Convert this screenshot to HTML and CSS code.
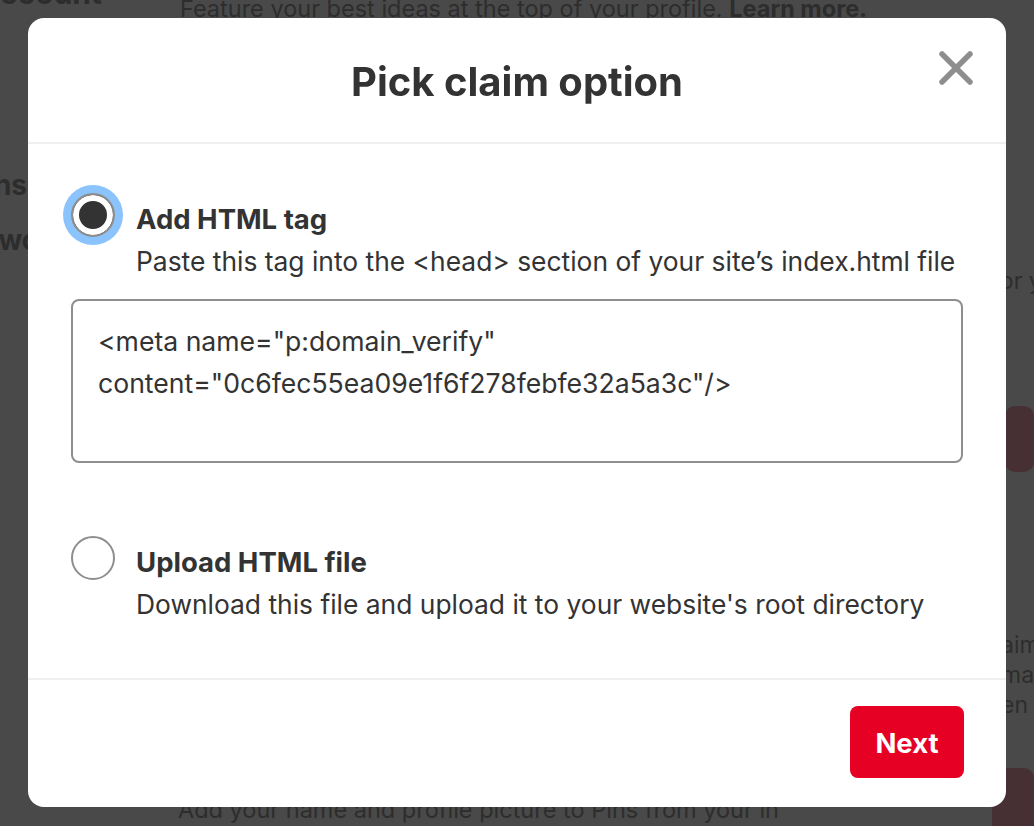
FILE: index.html
```html
<!DOCTYPE html>
<html lang="en">
<head>
    <meta charset="UTF-8">
    <meta name="viewport" content="width=device-width, initial-scale=1.0">
    <title>Pick claim option</title>
    <link rel="stylesheet" href="styles.css">
</head>
<body>
    <div class="page">
        <div class="sidebar">
            <div class="side-item side-top"><span>Account</span></div>
            <div class="side-item side-claims"><span>Notifications</span></div>
            <div class="side-item side-pass"><span>Password</span></div>
        </div>
        <div class="main">
            <p class="feature">Feature your best ideas at the top of your profile. <b>Learn more.</b></p>
            <div class="hidden-area"></div>
            <p class="bottom-text">Add your name and profile picture to Pins from your in</p>
        </div>
        <div class="right-col">
            <p class="r-text r-for">for your</p>
            <div class="r-button"></div>
            <p class="r-text r-lines">aim<br>ma<br>en</p>
            <div class="r-button r-button-low"></div>
        </div>
    </div>

    <div class="overlay">
        <div class="modal">
            <div class="modal-header">
                <h1>Pick claim option</h1>
                <button class="close" aria-label="Close">
                    <svg width="36" height="36" viewBox="0 0 36 36">
                        <path d="M4 4 L32 32 M32 4 L4 32" stroke="#8e8e8e" stroke-width="5.5" stroke-linecap="round" fill="none"/>
                    </svg>
                </button>
            </div>
            <div class="modal-body">
                <div class="option">
                    <span class="radio checked"></span>
                    <div class="option-title">Add HTML tag</div>
                    <div class="option-desc">Paste this tag into the &lt;head&gt; section of your site’s index.html file</div>
                </div>
                <div class="tag-box">&lt;meta name="p:domain_verify"<br>content="0c6fec55ea09e1f6f278febfe32a5a3c"/&gt;</div>
                <div class="option option-upload">
                    <span class="radio"></span>
                    <div class="option-title">Upload HTML file</div>
                    <div class="option-desc">Download this file and upload it to your website's root directory</div>
                </div>
            </div>
            <div class="modal-footer">
                <button class="next">Next</button>
            </div>
        </div>
    </div>
</body>
</html>
```

FILE: styles.css
```css
body {
    margin: 0;
    padding: 0;
    font-family: 'Inter', 'Noto Sans', sans-serif;
    background: #494949;
    color: #333;
    overflow: hidden;
    height: 826px;
}

/* page behind the dimmed overlay */
.page {
    display: grid;
    grid-template-columns: 180px 812px 1fr;
    color: #2d2d2d;
    height: 826px;
    overflow: hidden;
}
.sidebar {
    display: flex;
    flex-direction: column;
}
.side-item {
    display: flex;
    justify-content: flex-end;
    overflow: hidden;
    font-size: 28px;
    font-weight: 700;
    line-height: 34px;
    white-space: nowrap;
}
.side-top {
    width: 102px;
    margin-top: -24px;
    font-size: 30px;
}
.side-claims {
    width: 27px;
    margin-top: 158px;
}
.side-pass {
    width: 100px;
    margin-top: 21px;
    justify-content: flex-start;
}
.side-pass span {
    margin-left: -67px;
}
.main p {
    margin: 0;
    white-space: nowrap;
    font-size: 23.5px;
}
.feature {
    margin-top: -6px !important;
    line-height: 30px;
}
.hidden-area {
    height: 771px;
}
.bottom-text {
    margin-left: -2px !important;
}
.right-col {
    overflow: hidden;
    white-space: nowrap;
}
.r-text {
    margin: 0;
    font-size: 23px;
}
.r-for {
    margin-top: 266px;
    line-height: 30px;
}
.r-button {
    margin-top: 110px;
    margin-left: 13px;
    height: 66px;
    border-radius: 10px;
    background: #473034;
}
.r-lines {
    margin-top: 158px;
    margin-left: 9px;
    line-height: 30px;
}
.r-button-low {
    margin-top: 48px;
    margin-left: 0;
    height: 80px;
}

/* modal */
.overlay {
    position: fixed;
    inset: 0;
    display: flex;
    align-items: flex-start;
    justify-content: center;
    padding-top: 18px;
}
.modal {
    width: 978px;
    height: 789px;
    background: #fff;
    border-radius: 16px;
    display: flex;
    flex-direction: column;
}
.modal-header {
    position: relative;
    height: 124px;
    flex-shrink: 0;
    display: flex;
    align-items: center;
    justify-content: center;
    border-bottom: 2px solid #efefef;
}
.modal-header h1 {
    margin: 0;
    margin-top: 2px;
    font-size: 40px;
    font-weight: 700;
    color: #333;
}
.close {
    position: absolute;
    top: 32px;
    right: 32px;
    width: 36px;
    height: 36px;
    padding: 0;
    border: none;
    background: none;
    cursor: pointer;
}
.close svg {
    display: block;
}
.modal-body {
    flex: 1;
    padding: 49px 43px 0 43px;
}
.option {
    display: grid;
    grid-template-columns: 44px 1fr;
    column-gap: 21px;
    align-items: start;
}
.radio {
    width: 44px;
    height: 44px;
    box-sizing: border-box;
    border-radius: 50%;
    border: 2px solid #8e8e8e;
    background: #fff;
}
.radio.checked {
    background: #333;
    box-shadow: inset 0 0 0 6px #fff, 0 0 0 8px #8bc4fc;
}
.option-title {
    font-size: 27.5px;
    font-weight: 700;
    line-height: 44px;
    padding-top: 4px;
    color: #333;
}
.option-desc {
    grid-column: 2;
    font-size: 26.4px;
    line-height: 36px;
    margin-top: 2px;
    color: #333;
    white-space: nowrap;
}
.tag-box {
    margin-top: 20px;
    height: 164px;
    box-sizing: border-box;
    border: 2px solid #8e8e8e;
    border-radius: 8px;
    padding: 19px 25px;
    font-size: 26.6px;
    line-height: 42px;
    color: #333;
}
.option-upload {
    margin-top: 73px;
}
.modal-footer {
    height: 129px;
    flex-shrink: 0;
    box-sizing: border-box;
    border-top: 2px solid #efefef;
    display: flex;
    justify-content: flex-end;
    align-items: flex-start;
    padding: 26px 42px 0 0;
}
.next {
    width: 114px;
    height: 72px;
    border: none;
    border-radius: 8px;
    background: #e60023;
    color: #fff;
    font-family: 'Inter', 'Noto Sans', sans-serif;
    font-size: 27.5px;
    font-weight: 700;
    padding-top: 3px;
    cursor: pointer;
}
```
